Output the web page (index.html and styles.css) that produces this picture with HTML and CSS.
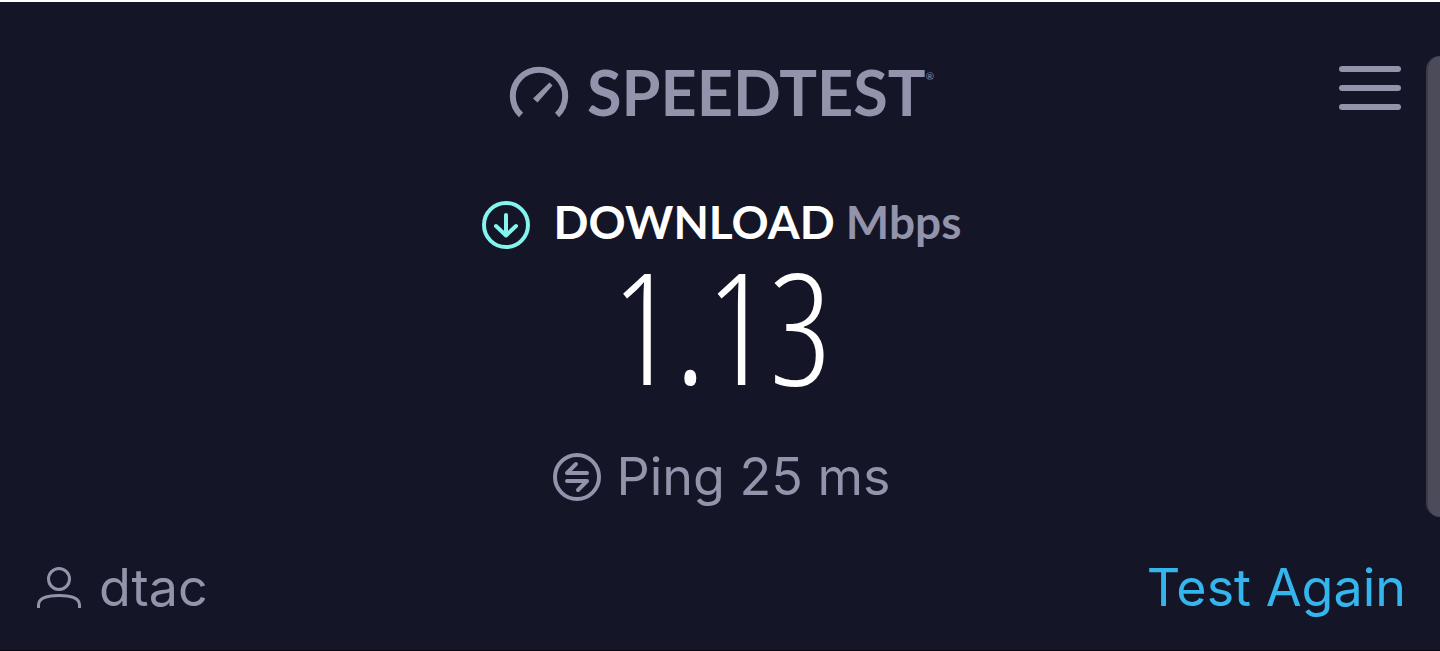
FILE: index.html
```html
<!DOCTYPE html>
<html lang="en">
<head>
  <meta charset="UTF-8">
  <meta name="viewport" content="width=device-width, initial-scale=1.0">
  <title>Speedtest</title>
  <link rel="stylesheet" href="styles.css">
</head>
<body>
  <div class="app">
    <header class="header">
      <h1 class="brand">
        <svg class="brand-icon" viewBox="0 0 60 52" aria-hidden="true">
          <path d="M12 49A26.200 26.200 0 1 1 48 49" fill="none" stroke="currentColor" stroke-width="6"/>
          <path d="M24 32.500L40.500 16.500L43.500 19.500L28.500 36.500Z" fill="currentColor"/>
        </svg>
        <span class="brand-name">SPEEDTEST<sup class="brand-mark">®</sup></span>
      </h1>
      <button class="menu" type="button" aria-label="Menu">
        <span class="menu-bar"></span>
        <span class="menu-bar"></span>
        <span class="menu-bar"></span>
      </button>
    </header>

    <main class="result">
      <h2 class="download">
        <svg class="round-icon download-icon" viewBox="0 0 48 48" aria-hidden="true">
          <circle cx="24" cy="24" r="22"/>
          <path d="M24 14V34M14 25L24 34.500L34 25"/>
        </svg>
        <span class="download-label">DOWNLOAD <span class="unit">Mbps</span></span>
      </h2>
      <p class="speed">1.13</p>
      <p class="ping">
        <svg class="round-icon" viewBox="0 0 48 48" aria-hidden="true">
          <circle cx="24" cy="24" r="22"/>
          <path d="M34 20H14L23 11M14 28H34L25 37"/>
        </svg>
        <span>Ping 25 ms</span>
      </p>
    </main>

    <footer class="footer">
      <div class="provider">
        <svg class="user-icon" viewBox="0 0 44 42" aria-hidden="true">
          <circle cx="22" cy="12" r="10.500"/>
          <path d="M1.500 41V38C1.500 31 10 28.500 22 28.500S42.500 31 42.500 38V41"/>
        </svg>
        <span>dtac</span>
      </div>
      <a class="again" href="#">Test Again</a>
    </footer>

    <div class="edge-handle"></div>
  </div>
</body>
</html>
```
FILE: styles.css
```css
* {
  box-sizing: border-box;
}
body {
  margin: 0;
  background-color: #141526;
  color: #9393ab;
  font-family: Inter, sans-serif;
}
h1, h2, p {
  margin: 0;
}
.app {
  position: relative;
  display: flex;
  flex-direction: column;
  min-height: 100vh;
  padding: 64px 34px 32px 37px;
  border-top: 2px solid #fff;
  border-bottom: 1px solid #080812;
}
.header {
  display: grid;
  grid-template-columns: 1fr auto 1fr;
  align-items: start;
}
.brand {
  grid-column: 2;
  display: flex;
  align-items: center;
  gap: 18px;
  font-family: Lato, sans-serif;
  line-height: 52px;
}
.brand-icon {
  width: 60px;
  height: 52px;
}
.brand-name {
  font-size: 63px;
  font-weight: 700;
}
.brand-mark {
  font-size: 10px;
  font-weight: 400;
  line-height: 10px;
  vertical-align: 36px;
}
.menu {
  justify-self: end;
  display: flex;
  flex-direction: column;
  gap: 13px;
  width: 62px;
  margin-right: 5px;
  padding: 0;
  border: none;
  background: none;
  cursor: pointer;
}
.menu-bar {
  width: 100%;
  height: 6px;
  border-radius: 3px;
  background-color: #9393ab;
}
.result {
  display: flex;
  flex-direction: column;
  align-items: center;
  padding-top: 80px;
}
.download,
.ping {
  display: flex;
  align-items: center;
}
.download {
  gap: 24px;
  color: #fff;
  font-family: Lato, sans-serif;
  font-size: 46px;
  font-weight: 700;
  line-height: 48px;
}
.download-label {
  padding-bottom: 6px;
}
.unit {
  color: #9393ab;
}
.round-icon {
  width: 48px;
  height: 48px;
  fill: none;
  stroke: currentColor;
  stroke-width: 4;
  stroke-linecap: round;
  stroke-linejoin: round;
}
.download-icon {
  color: #84f5ee;
}
.speed {
  color: #fff;
  font-family: "Open Sans Condensed Light", "Open Sans Condensed", "Open Sans", sans-serif;
  font-size: 156px;
  font-weight: 100;
  line-height: 146px;
}
.ping {
  gap: 16px;
  margin-top: 52px;
  font-size: 52px;
  line-height: 54px;
}
.footer {
  display: flex;
  justify-content: space-between;
  align-items: center;
  margin-top: auto;
  font-size: 52px;
  line-height: 60px;
}
.provider {
  display: flex;
  align-items: center;
  gap: 18px;
}
.user-icon {
  width: 44px;
  height: 42px;
  fill: none;
  stroke: currentColor;
  stroke-width: 3;
}
.again {
  color: #35b5ed;
  text-decoration: none;
}
.edge-handle {
  position: absolute;
  top: 54px;
  right: 0;
  width: 14px;
  height: 461px;
  border-left: 2px solid #3b3b49;
  border-radius: 14px 0 0 14px;
  background-color: #4b4b59;
}
```
